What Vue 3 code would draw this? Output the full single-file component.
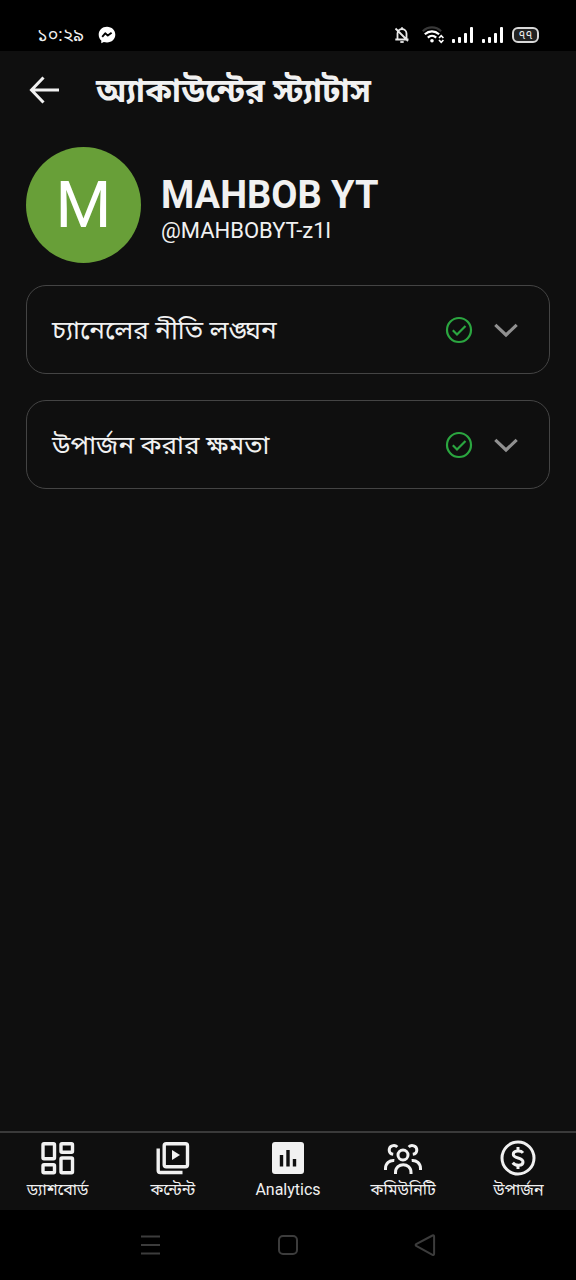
<script setup>
import { ref } from 'vue'

const sections = ref([
  { id: 'policy', label: 'চ্যানেলের নীতি লঙ্ঘন', open: false },
  { id: 'earning', label: 'উপার্জন করার ক্ষমতা', open: false },
])

const tabs = [
  { id: 'dashboard', label: 'ড্যাশবোর্ড' },
  { id: 'content', label: 'কন্টেন্ট' },
  { id: 'analytics', label: 'Analytics' },
  { id: 'community', label: 'কমিউনিটি' },
  { id: 'earn', label: 'উপার্জন' },
]
</script>

<template>
  <div class="screen">
    <div class="status-bar">
      <span class="clock">১০:২৯</span>
      <svg class="messenger" width="18" height="18" viewBox="0 0 18 18" aria-hidden="true">
        <path d="M9 .8C4.200.8.7 4.200.7 8.700c0 2.400 1 4.400 2.600 5.800v2.700l2.500-1.300c1 .3 2 .5 3.200.5 4.800 0 8.300-3.400 8.300-7.700S13.800.8 9 .8z" fill="#fff" />
        <path d="M4.200 10.800l3-3.500 2.600 2.300 3.800-2.800" fill="none" stroke="#000" stroke-width="1.900" stroke-linejoin="round" />
      </svg>
      <div class="indicators">
        <svg width="16" height="18" viewBox="0 0 16 18" fill="none" stroke="#e8e8e8" stroke-width="1.800" aria-hidden="true">
          <path d="M3.500 13V7.500a4.500 4.500 0 0 1 9 0V13M1.300 13.500h13.200M8 3V1.300M1.500 2.500l12.500 12.500" />
          <path d="M6.300 16h3.400" />
        </svg>
        <svg class="wifi" width="22" height="18" viewBox="0 0 22 18" fill="none" stroke="#fff" stroke-width="2.200" aria-hidden="true">
          <path d="M.8 5.200c5.300-5 13-5 18.300 0" stroke="#383838" />
          <path d="M2.800 8.300c4.300-4 10-4 14.300 0M5.800 11.600c2.500-2.300 6-2.300 8.400 0" />
          <circle cx="10" cy="14.800" r="1.800" fill="#fff" stroke="none" />
          <path d="M17 12l2.200-2.400 2.200 2.400M17 14l2.200 2.400 2.200-2.400" stroke-width="1.600" />
        </svg>
        <svg v-for="n in 2" :key="n" class="signal" width="22" height="18" viewBox="0 0 22 18" fill="#fff" aria-hidden="true">
          <rect x="0" y="13" width="3" height="4" rx="1" />
          <rect x="6" y="11" width="3" height="6" rx="1" />
          <rect x="12" y="7" width="3" height="10" rx="1" />
          <rect x="18" y="1" width="3" height="16" rx="1" />
        </svg>
        <span class="battery">৭৭</span>
      </div>
    </div>

    <header class="app-bar">
      <button class="back" type="button" aria-label="ফিরে যান">
        <svg width="32" height="32" viewBox="0 0 32 32" fill="none" stroke="#f1f1f1" stroke-width="3" aria-hidden="true">
          <path d="M31 16H3.500M15.500 3.500L3.500 16l12 12.500" />
        </svg>
      </button>
      <h1>অ্যাকাউন্টের স্ট্যাটাস</h1>
    </header>

    <main>
      <section class="channel">
        <div class="avatar">M</div>
        <div class="identity">
          <h2>MAHBOB YT</h2>
          <p>@MAHBOBYT-z1l</p>
        </div>
      </section>

      <button
        v-for="section in sections"
        :key="section.id"
        class="card"
        type="button"
        :aria-expanded="section.open"
        @click="section.open = !section.open"
      >
        <span class="card-label">{{ section.label }}</span>
        <svg width="28" height="28" viewBox="0 0 28 28" fill="none" stroke="#2ba640" stroke-width="2.200" aria-hidden="true">
          <circle cx="14" cy="14" r="12" />
          <path d="M7.800 14.300l4.200 4.200 8.500-8.500" />
        </svg>
        <svg class="chevron" width="24" height="16" viewBox="0 0 24 16" fill="none" stroke="#909090" stroke-width="3.200" aria-hidden="true">
          <path d="M1.300 2.800L12 13 22.700 2.800" />
        </svg>
      </button>
    </main>

    <nav class="tabs">
      <button v-for="tab in tabs" :key="tab.id" class="tab" type="button">
        <svg width="40" height="36" viewBox="0 0 40 36" fill="none" stroke="#f1f1f1" stroke-width="3.400" aria-hidden="true">
          <g v-if="tab.id === 'dashboard'">
            <rect x="5" y="3.700" width="11.500" height="15" rx="1" />
            <rect x="23" y="3.700" width="11.500" height="8.500" rx="1" />
            <rect x="5" y="24.700" width="11.500" height="8" rx="1" />
            <rect x="23" y="18" width="11.500" height="14.700" rx="1" />
          </g>
          <g v-else-if="tab.id === 'content'">
            <rect x="11.200" y="3.700" width="23.300" height="23" rx="2" />
            <path d="M5.200 8.500v22a2 2 0 0 0 2 2h22.300" />
            <path d="M19 10v10l8-5z" fill="#f1f1f1" stroke="none" />
          </g>
          <g v-else-if="tab.id === 'analytics'">
            <rect x="4" y="2" width="32" height="32" rx="3" fill="#f1f1f1" stroke="none" />
            <path d="M13.500 15v11.500M20 10v16.500M26.500 19v7.500" stroke="#0f0f0f" />
          </g>
          <g v-else-if="tab.id === 'community'" stroke-width="3">
            <circle cx="20" cy="15" r="5" />
            <path d="M12.500 34v-1.500c0-10.300 15.500-10.300 15.500 0V34" />
            <path d="M14.300 7c-2.800-2.800-8.100-1.200-8.100 3 0 2.300 1.500 4 4 4.300M25.700 7c2.800-2.800 8.100-1.200 8.100 3 0 2.300-1.500 4-4 4.300" />
            <path d="M2.500 30v-1.500c0-5 4-8.500 8.800-8M37.500 30v-1.500c0-5-4-8.500-8.800-8" />
          </g>
          <g v-else stroke-width="3">
            <circle cx="20" cy="18" r="16" />
            <path d="M25 12.800c-2-2.600-9.700-2.800-9.700 1.400 0 5 9.700 2.600 9.700 7.800 0 4.300-7.500 4.300-10.300.8M20 7v4.500M20 24.500V29" />
          </g>
        </svg>
        <span>{{ tab.label }}</span>
      </button>
    </nav>

    <div class="system-bar">
      <button type="button" aria-label="সাম্প্রতিক">
        <svg width="24" height="24" viewBox="0 0 24 24" aria-hidden="true"><path d="M3 3.500h19M3 12h19M3 20.500h19" /></svg>
      </button>
      <button type="button" aria-label="হোম">
        <svg width="24" height="24" viewBox="0 0 24 24" aria-hidden="true"><rect x="3" y="3" width="18" height="18" rx="4" /></svg>
      </button>
      <button type="button" aria-label="পিছনে">
        <svg width="24" height="24" viewBox="0 0 24 24" aria-hidden="true"><path d="M18.500 2.500L2.200 11a1.200 1.200 0 0 0 0 2l16.300 8.800c.8.400 1.600 0 1.600-1V3.500c0-1-.8-1.400-1.600-1z" /></svg>
      </button>
    </div>
  </div>
</template>

<style>
body {
  background: #0f0f0f;
}
</style>

<style scoped>
.screen {
  display: flex;
  flex-direction: column;
  min-height: 100vh;
  background: #0f0f0f;
  color: #f1f1f1;
  font-family: Roboto, "Noto Sans Bengali", "Noto Sans", sans-serif;
}

button {
  padding: 0;
  border: 0;
  background: none;
  color: inherit;
  font: inherit;
  cursor: pointer;
}

svg {
  display: block;
  flex: none;
}

h1,
h2,
p {
  margin: 0;
}

.status-bar {
  display: flex;
  align-items: center;
  height: 51px;
  padding: 18px 37px 0;
  box-sizing: border-box;
  background: #000;
}

.clock {
  font-size: 18px;
  line-height: 24px;
}

.messenger {
  margin-left: 14px;
}

.indicators {
  display: flex;
  align-items: center;
  gap: 8px;
  margin-left: auto;
}

.wifi {
  margin-left: 4px;
}

.battery {
  width: 27px;
  box-sizing: border-box;
  border: 2px solid #d8d8d8;
  border-radius: 6px;
  background: #222;
  font-size: 12px;
  line-height: 12px;
  text-align: center;
}

.app-bar {
  display: flex;
  align-items: center;
  gap: 36px;
  height: 78px;
  padding: 0 28px;
}

.app-bar h1 {
  padding-top: 2px;
  font-size: 33px;
  line-height: 40px;
  font-weight: 700;
}

main {
  flex: 1;
  display: flex;
  flex-direction: column;
  gap: 26px;
  padding: 18px 26px;
}

.channel {
  display: flex;
  align-items: center;
  gap: 20px;
  margin-bottom: -4px;
}

.avatar {
  display: grid;
  place-items: center;
  width: 115px;
  height: 116px;
  border-radius: 50%;
  background: #689f38;
  color: #fff;
  font-size: 64px;
}

.identity {
  padding-top: 8px;
}

h2 {
  font-size: 38px;
  line-height: 44px;
  font-weight: 700;
}

.identity p {
  font-size: 22px;
  line-height: 28px;
}

.card {
  display: flex;
  align-items: center;
  height: 89px;
  padding: 0 31px 0 25px;
  border: 1px solid #444;
  border-radius: 20px;
  text-align: left;
}

.card-label {
  flex: 1;
  font-size: 26px;
  line-height: 32px;
}

.chevron {
  margin-left: 21px;
}

.tabs {
  display: grid;
  grid-template-columns: repeat(5, 1fr);
  height: 79px;
  box-sizing: border-box;
  border-top: 2px solid #3a3a3a;
}

.tab {
  display: flex;
  flex-direction: column;
  align-items: center;
  gap: 4px;
  padding-top: 7px;
  font-size: 16px;
  line-height: 20px;
}

.system-bar {
  display: flex;
  align-items: center;
  justify-content: space-between;
  height: 70px;
  padding: 0 138px;
  background: #000;
}

.system-bar svg {
  fill: none;
  stroke: #3c3c3c;
  stroke-width: 2;
}
</style>
